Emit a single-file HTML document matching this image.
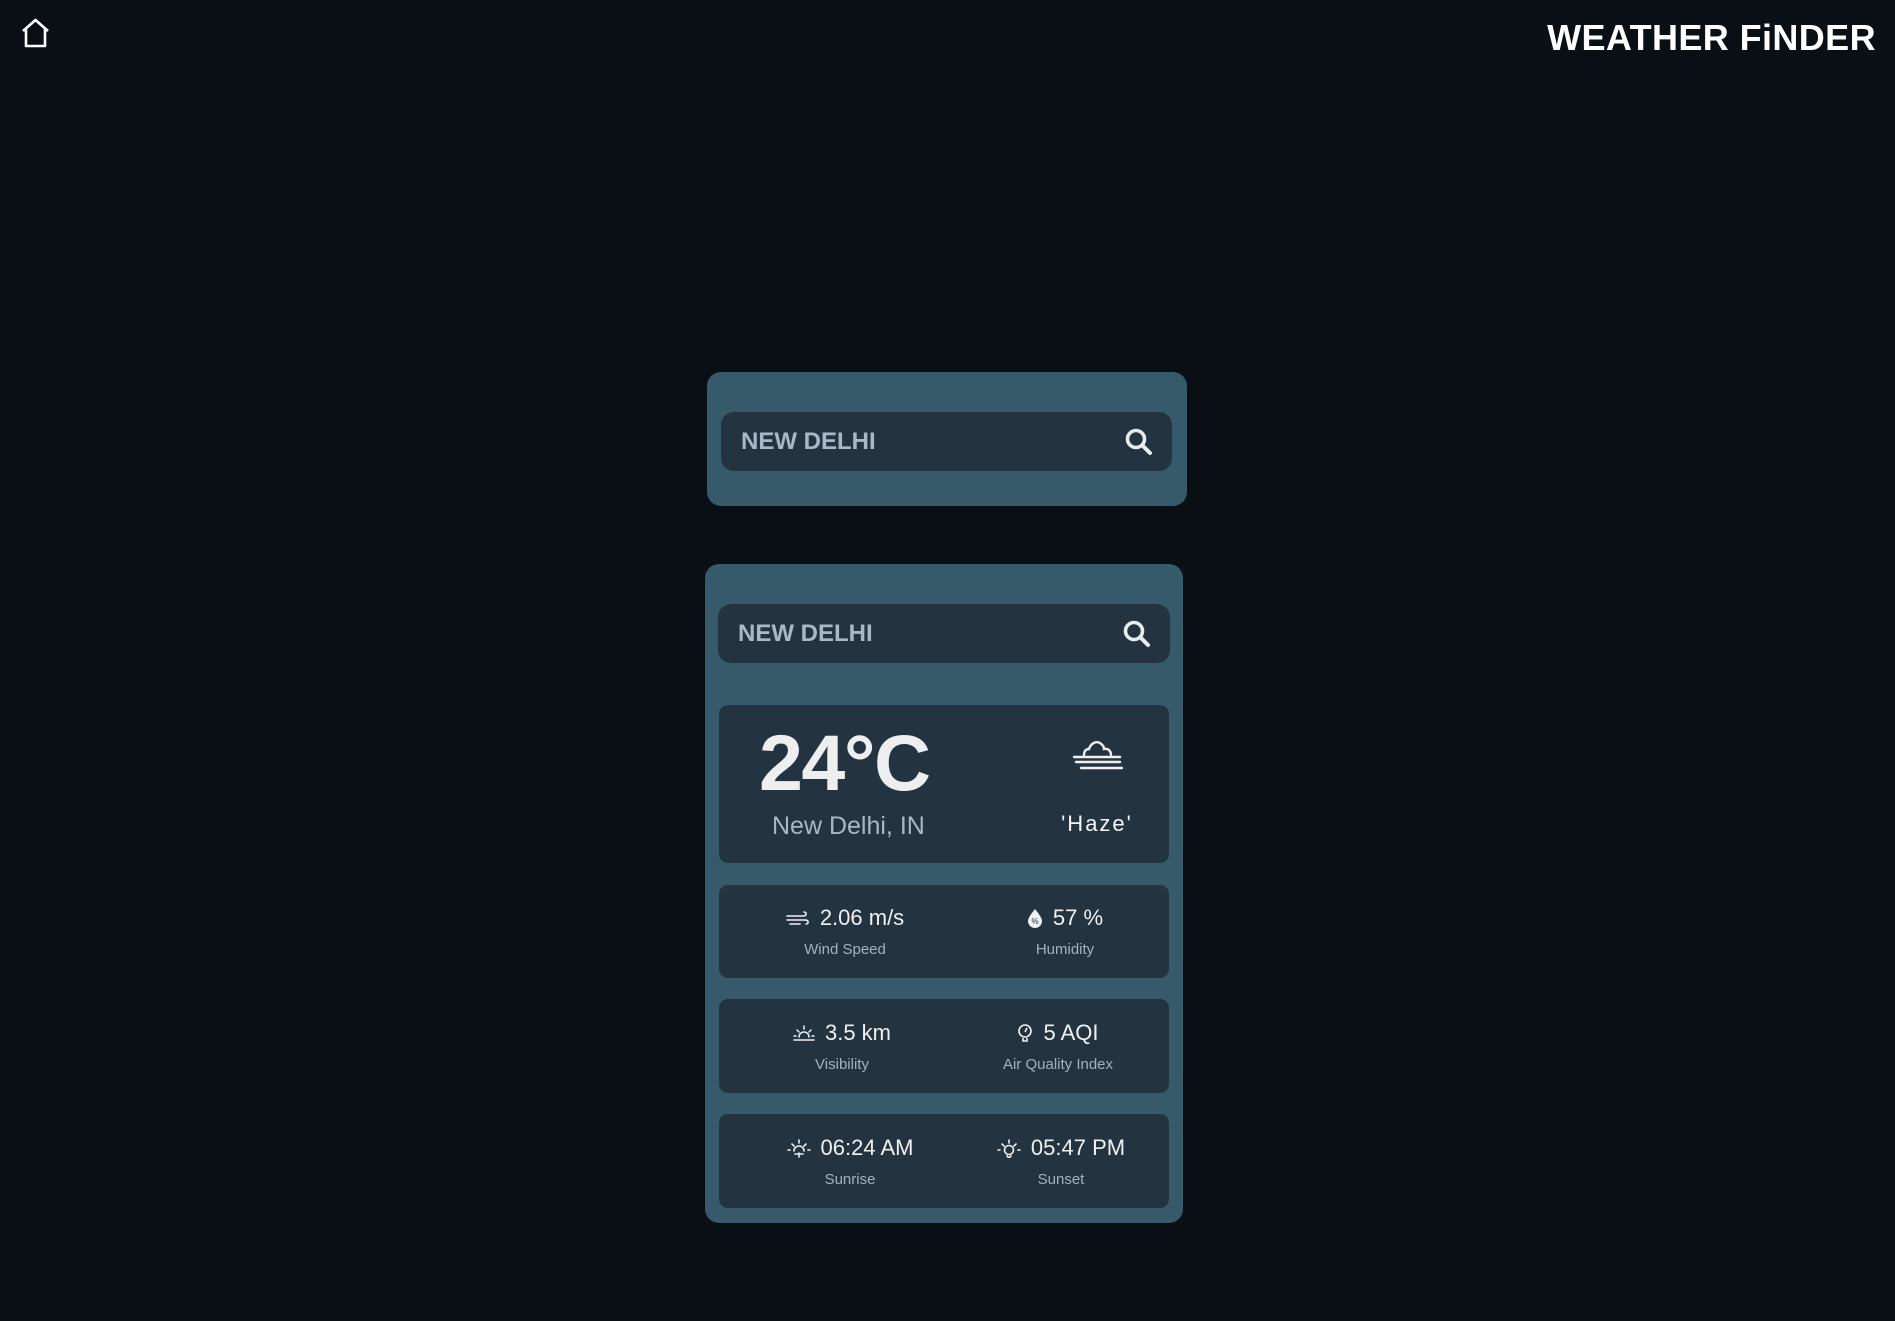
<!DOCTYPE html>
<html><head><meta charset="utf-8"><style>
*{margin:0;padding:0;box-sizing:border-box}
html,body{width:1895px;height:1321px;background:#0a0f16;overflow:hidden;font-family:"Liberation Sans",sans-serif;color:#eef0f2}
.abs{position:absolute}
.title{right:19px;top:17px;font-size:36px;font-weight:bold;color:#fff;letter-spacing:0.4px}
.card{background:#375a6b;border-radius:14px}
.inp{background:#233440;border-radius:13px}
.inp span{position:absolute;left:20px;top:50%;transform:translateY(-50%);font-size:24px;font-weight:bold;color:#a9b7c6}
.inp svg{position:absolute;right:18px;top:50%;transform:translateY(-50%)}
.panel{background:#233440;border-radius:9px}
.col{position:absolute;width:220px;text-align:center}
.val{font-size:22px;color:#eef0f2;display:flex;justify-content:center;align-items:center;gap:10px;height:26px}
.lab{font-size:15px;color:#a5b1ba;margin-top:10px}
</style></head><body>
<svg class="abs" style="left:19px;top:17px" width="33" height="32" viewBox="0 0 33 32"><path d="M4 14 L16.5 3 L29 14 M7 12 V29 H26 V12" fill="none" stroke="#fff" stroke-width="2.6" stroke-linejoin="round"/></svg>
<div class="abs title">WEATHER FiNDER</div>

<div class="abs card" style="left:707px;top:372px;width:480px;height:134px"></div>
<div class="abs inp" style="left:721px;top:412px;width:451px;height:59px"><span>NEW DELHI</span>
<svg width="30" height="30" viewBox="0 0 30 30"><circle cx="12" cy="12" r="8.5" fill="none" stroke="#e8ecef" stroke-width="3.6"/><path d="M18.5 18.5 L26 26" stroke="#e8ecef" stroke-width="4" stroke-linecap="round"/></svg></div>

<div class="abs card" style="left:705px;top:564px;width:478px;height:659px"></div>
<div class="abs inp" style="left:718px;top:604px;width:452px;height:59px"><span>NEW DELHI</span>
<svg width="30" height="30" viewBox="0 0 30 30"><circle cx="12" cy="12" r="8.5" fill="none" stroke="#e8ecef" stroke-width="3.6"/><path d="M18.5 18.5 L26 26" stroke="#e8ecef" stroke-width="4" stroke-linecap="round"/></svg></div>

<div class="abs panel" style="left:719px;top:705px;width:450px;height:158px"></div>
<div class="abs" style="left:759px;top:717px;font-size:79px;font-weight:bold;color:#eceef0;letter-spacing:-1.5px">24°C</div>
<div class="abs" style="left:772px;top:812px;font-size:25px;color:#a9b7c4">New Delhi, IN</div>
<svg class="abs" style="left:1072px;top:736px" width="52" height="42" viewBox="0 0 52 42"><g fill="none" stroke="#eef0f2" stroke-width="2.4" stroke-linecap="round"><path d="M12 19 C12 15 14 13 17 13 C19 7 24 5 28 7 C31 9 32 11 32 13 C36 12 39 15 39 19"/><path d="M2 21 H48 M4 26 H48 M9 32 H50"/></g></svg>
<div class="abs" style="left:1047px;top:811px;width:100px;text-align:center;font-size:22px;letter-spacing:2px;color:#f4f5f6">'Haze'</div>

<div class="abs panel" style="left:719px;top:885px;width:450px;height:93px">
 <div class="col" style="left:16px;top:20px"><div class="val"><svg width="24" height="14" viewBox="0 0 24 14"><path d="M1 5 H17 M1 9 H19 M4 13 H14 M17 5 C21 5 21 1 18 1 M19 9 C23 9 23 13 20 13" fill="none" stroke="#eef0f2" stroke-width="1.6" stroke-linecap="round"/></svg>2.06 m/s</div><div class="lab">Wind Speed</div></div>
 <div class="col" style="left:236px;top:20px"><div class="val"><svg width="16" height="20" viewBox="0 0 16 20"><path d="M8 1 C8 1 1 9 1 13 A7 7 0 0 0 15 13 C15 9 8 1 8 1Z" fill="#eef0f2"/><text x="8" y="16" font-size="8" text-anchor="middle" fill="#233440" font-family="Liberation Sans">%</text></svg>57 %</div><div class="lab">Humidity</div></div>
</div>
<div class="abs panel" style="left:719px;top:999px;width:450px;height:94px">
 <div class="col" style="left:13px;top:21px"><div class="val"><svg width="22" height="18" viewBox="0 0 22 18"><g fill="none" stroke="#eef0f2" stroke-width="1.5" stroke-linecap="round"><path d="M1 16 H21 M6 13 A5 5 0 0 1 16 13 M11 2 V5 M4 6 L6 8 M18 6 L16 8 M1 12 H3 M19 12 H21"/></g></svg>3.5 km</div><div class="lab">Visibility</div></div>
 <div class="col" style="left:229px;top:21px"><div class="val"><svg width="16" height="20" viewBox="0 0 16 20"><g fill="none" stroke="#eef0f2" stroke-width="1.6"><circle cx="8" cy="8" r="6"/><path d="M6 15 V18 H10 V15 M8 9 L10 5"/></g></svg>5 AQI</div><div class="lab">Air Quality Index</div></div>
</div>
<div class="abs panel" style="left:719px;top:1114px;width:450px;height:94px">
 <div class="col" style="left:21px;top:21px"><div class="val"><svg width="24" height="20" viewBox="0 0 24 20"><g fill="none" stroke="#eef0f2" stroke-width="1.6" stroke-linecap="round"><path d="M7 13 A5 5 0 0 1 17 13 M8 16 H16 M12 2 V5 M5 6 L7 8 M19 6 L17 8 M1 12 H3 M21 12 H23 M12 15 V19"/></g></svg>06:24 AM</div><div class="lab">Sunrise</div></div>
 <div class="col" style="left:232px;top:21px"><div class="val"><svg width="24" height="20" viewBox="0 0 24 20"><g fill="none" stroke="#eef0f2" stroke-width="1.6" stroke-linecap="round"><circle cx="12" cy="12" r="4.5"/><path d="M12 2 V5 M5 6 L7 8 M19 6 L17 8 M1 12 H3 M21 12 H23 M10 18 L12 20 L14 18"/></g></svg>05:47 PM</div><div class="lab">Sunset</div></div>
</div>
</body></html>
